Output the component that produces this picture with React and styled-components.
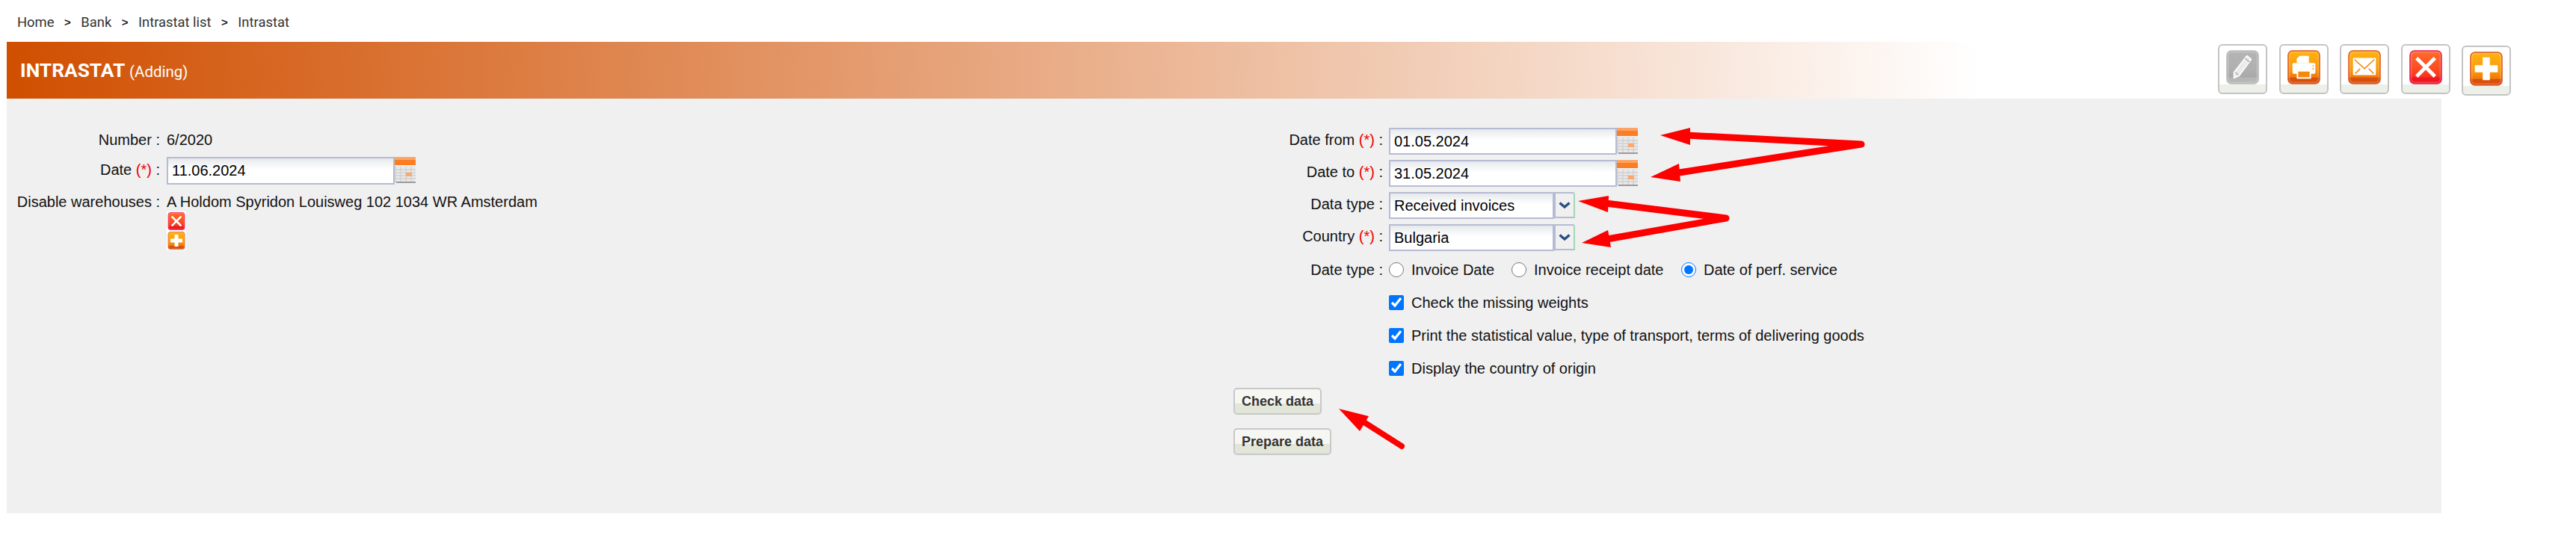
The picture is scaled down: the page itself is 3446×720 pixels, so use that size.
import styled, { createGlobalStyle } from "styled-components";

const GlobalStyle = createGlobalStyle`
  html, body {
    margin: 0;
    padding: 0;
    background: #fff;
  }
  body {
    font-family: "Liberation Sans", Arial, sans-serif;
    font-size: 20px;
    color: #111;
    overflow: hidden;
  }
`;

function GlossIcon({ tone, children, size = 46 }) {
  const id = `gloss-${tone}`;
  const stops = {
    grey: ["#b4b4b4", "#b0b0b0", "#a9a9a9", "#b6b6b6"],
    orange: ["#ffb311", "#fb9a0c", "#f07a08", "#d9500a"],
    red: ["#ff6c2c", "#fb4c24", "#f8301f", "#ee1620"],
  }[tone];
  const edge = { grey: "#bdbdbd", orange: "#dc5a28", red: "#f0205a" }[tone];
  return (
    <svg width={size} height={size} viewBox="0 0 46 48">
      <defs>
        <linearGradient id={id} x1="0" y1="0" x2="0" y2="1">
          <stop offset="0" stopColor={stops[0]} />
          <stop offset="0.55" stopColor={stops[1]} />
          <stop offset="0.8" stopColor={stops[2]} />
          <stop offset="0.82" stopColor={stops[3]} />
          <stop offset="1" stopColor={stops[3]} />
        </linearGradient>
      </defs>
      <rect x="1" y="1" width="44" height="46" rx="6" fill={`url(#${id})`} stroke={edge} strokeWidth="1.5" />
      <rect x="3" y="3" width="40" height="42" rx="4" fill="none" stroke="#fff" strokeOpacity="0.3" strokeWidth="1" />
      {children}
    </svg>
  );
}

const PencilGlyph = () => (
  <g fill="none" stroke="#fff" strokeWidth="1.6" strokeLinejoin="round">
    <path d="M29 8l6 5-17 23-7 3 0-8z" fill="#f2f2f2" fillOpacity="0.9" />
    <path d="M26.5 11.5l6 5" stroke="#b0b0b0" />
    <path d="M13 31l4 4" stroke="#b0b0b0" />
  </g>
);

const PrintGlyph = () => (
  <g>
    <path d="M13 12l4-4h13v10H13z" fill="#fff" />
    <rect x="7" y="18" width="32" height="15" rx="2" fill="#fff" />
    <rect x="13" y="27" width="20" height="13" fill="#fff" />
    <rect x="15" y="30" width="16" height="8" fill="#f58a0a" />
    <circle cx="36" cy="22" r="1" fill="#f58a0a" />
    <circle cx="36" cy="26" r="1" fill="#f58a0a" />
  </g>
);

const MailGlyph = () => (
  <g>
    <rect x="7" y="11" width="32" height="24" rx="1" fill="#fff" />
    <path d="M9 13l14 13 14-13" fill="none" stroke="#f5890f" strokeWidth="1.6" />
    <path d="M10 33l7-7M36 33l-7-7" fill="none" stroke="#f5890f" strokeWidth="1.6" />
  </g>
);

const CrossGlyph = () => (
  <path d="M12 13l22 22M34 13L12 35" stroke="#fff" strokeWidth="5" strokeLinecap="square" fill="none" />
);

const PlusGlyph = () => <path d="M18 8h10v11h11v10H28v11H18V29H7V19h11z" fill="#fff" />;

function CalendarIcon() {
  return (
    <svg width="28" height="36" viewBox="0 0 28 36">
      <rect x="0" y="0" width="28" height="4" fill="#fca466" />
      <rect x="0" y="4" width="28" height="7" fill="#fb7d24" />
      <rect x="2" y="12" width="26" height="23" fill="#e9e9e9" />
      <path d="M8 13v20M15 13v20M22 13v20M2 17h26M2 21h26M2 25h26M2 29h26" stroke="#cfcfcf" strokeWidth="1.3" />
      <rect x="15" y="21" width="8" height="5" fill="#fda869" />
      <rect x="2" y="33" width="26" height="2" fill="#9a9a9a" />
      <rect x="0" y="12" width="2" height="22" fill="#d5d5d5" />
    </svg>
  );
}

function SelectChevron() {
  return (
    <svg width="16" height="10" viewBox="0 0 16 10">
      <path d="M1.5 1.5L8 7l6.5-5.5" fill="none" stroke="#2b4d86" strokeWidth="3.4" />
    </svg>
  );
}

function Arrows() {
  return (
    <ArrowLayer viewBox="0 0 3446 720" width="3446" height="720">
      <g fill="#fd0000">
        <path d="M2221 181L2261 171L2261 194z" />
        <path d="M2208 237L2246 219L2248 243z" />
        <path d="M2111 269L2152 262L2151 284z" />
        <path d="M2116 325L2151 308L2155 331z" />
        <path d="M1791 547L1831 557L1819 577z" />
      </g>
      <g fill="none" stroke="#fd0000" strokeLinecap="round" strokeLinejoin="round">
        <path d="M2255 181L2490 193L2240 232" strokeWidth="9" />
        <path d="M2148 272L2309 292L2150 320" strokeWidth="9" />
        <path d="M1820 562L1875 597" strokeWidth="8" />
      </g>
    </ArrowLayer>
  );
}

export default function App() {
  return (
    <Page>
      <GlobalStyle />
      <Breadcrumb>
        <span>Home</span>
        <Sep>&gt;</Sep>
        <span>Bank</span>
        <Sep>&gt;</Sep>
        <span>Intrastat list</span>
        <Sep>&gt;</Sep>
        <span>Intrastat</span>
      </Breadcrumb>
      <TitleBar>
        <Title>
          INTRASTAT <small>(Adding)</small>
        </Title>
        <Toolbar>
          <ToolButton>
            <GlossIcon tone="grey"><PencilGlyph /></GlossIcon>
          </ToolButton>
          <ToolButton>
            <GlossIcon tone="orange"><PrintGlyph /></GlossIcon>
          </ToolButton>
          <ToolButton>
            <GlossIcon tone="orange"><MailGlyph /></GlossIcon>
          </ToolButton>
          <ToolButton>
            <GlossIcon tone="red"><CrossGlyph /></GlossIcon>
          </ToolButton>
          <ToolButton $drop>
            <GlossIcon tone="orange"><PlusGlyph /></GlossIcon>
          </ToolButton>
        </Toolbar>
      </TitleBar>
      <Panel>
        <LeftColumn>
          <LeftRow $h="36px">
            <Label>Number :</Label>
            <span>6/2020</span>
          </LeftRow>
          <LeftRow $h="37px" $mt="5px">
            <Label $up>
              Date <Req>(*)</Req> :
            </Label>
            <DateField>
              <TextBox $w="305px" $h="37px">11.06.2024</TextBox>
              <CalendarIcon />
            </DateField>
          </LeftRow>
          <LeftRow $top $mt="11px">
            <Label>Disable warehouses :</Label>
            <div>
              <span>A Holdom Spyridon Louisweg 102 1034 WR Amsterdam</span>
              <MiniIcons>
                <GlossIcon tone="red" size={24}><CrossGlyph /></GlossIcon>
                <GlossIcon tone="orange" size={24}><PlusGlyph /></GlossIcon>
              </MiniIcons>
            </div>
          </LeftRow>
        </LeftColumn>
        <RightColumn>
          <RightRow>
            <Label $up>
              Date from <Req>(*)</Req> :
            </Label>
            <DateField>
              <TextBox $w="305px">01.05.2024</TextBox>
              <CalendarIcon />
            </DateField>
          </RightRow>
          <RightRow>
            <Label $up>
              Date to <Req>(*)</Req> :
            </Label>
            <DateField>
              <TextBox $w="305px">31.05.2024</TextBox>
              <CalendarIcon />
            </DateField>
          </RightRow>
          <RightRow>
            <Label $up>Data type :</Label>
            <SelectBox>
              <TextBox $w="221px">Received invoices</TextBox>
              <SelectArrow>
                <SelectChevron />
              </SelectArrow>
            </SelectBox>
          </RightRow>
          <RightRow>
            <Label $up>
              Country <Req>(*)</Req> :
            </Label>
            <SelectBox>
              <TextBox $w="221px">Bulgaria</TextBox>
              <SelectArrow>
                <SelectChevron />
              </SelectArrow>
            </SelectBox>
          </RightRow>
          <RightRow>
            <Label>Date type :</Label>
            <Options>
              <Option $w="164px">
                <Radio name="dt" /> Invoice Date
              </Option>
              <Option $w="227px">
                <Radio name="dt" /> Invoice receipt date
              </Option>
              <Option>
                <Radio name="dt" defaultChecked /> Date of perf. service
              </Option>
            </Options>
          </RightRow>
          <CheckRow>
            <Option>
              <Check defaultChecked /> Check the missing weights
            </Option>
          </CheckRow>
          <CheckRow>
            <Option>
              <Check defaultChecked /> Print the statistical value, type of transport, terms of delivering goods
            </Option>
          </CheckRow>
          <CheckRow>
            <Option>
              <Check defaultChecked /> Display the country of origin
            </Option>
          </CheckRow>
          <Actions>
            <ActionButton>Check data</ActionButton>
            <ActionButton>Prepare data</ActionButton>
          </Actions>
        </RightColumn>
      </Panel>
      <Arrows />
    </Page>
  );
}

const Page = styled.div`
  position: relative;
  width: 3446px;
  height: 720px;
  overflow: hidden;
`;

const Breadcrumb = styled.nav`
  height: 56px;
  box-sizing: border-box;
  padding: 19px 0 0 23px;
  display: flex;
  gap: 13.5px;
  font-family: Roboto, sans-serif;
  font-size: 18.4px;
  line-height: 22px;
  color: #333;
`;

const Sep = styled.span`
  color: #222;
  font-family: "Liberation Sans", sans-serif;
  font-weight: 700;
  font-size: 15px;
`;

const TitleBar = styled.header`
  height: 76px;
  margin-left: 9px;
  display: flex;
  align-items: flex-start;
  justify-content: space-between;
  background: linear-gradient(to right, #d04f00 0, #ffffff 2640px);
`;

const Title = styled.h1`
  margin: 23px 0 0 18px;
  font-family: Roboto, sans-serif;
  font-size: 26.3px;
  line-height: 30px;
  font-weight: 700;
  color: #fff;
  small {
    font-size: 20.5px;
    font-weight: 400;
  }
`;

const Toolbar = styled.div`
  display: flex;
  gap: 15.5px;
  padding: 3px 87px 0 0;
`;

const ToolButton = styled.div`
  width: 66px;
  height: 67px;
  margin-top: ${(p) => (p.$drop ? "2px" : "0")};
  box-sizing: border-box;
  border: 2px solid #c4c4c4;
  border-radius: 6px;
  background: linear-gradient(to bottom, #fff 0, #fff 82%, #edf0e8 82%, #edf0e8 100%);
  display: flex;
  justify-content: center;
  padding-top: 6px;
`;

const Panel = styled.main`
  width: 3257px;
  height: 555px;
  margin-left: 9px;
  background: #f0f0f0;
  display: flex;
`;

const LeftColumn = styled.section`
  width: 1641px;
  padding-top: 33px;
  box-sizing: border-box;
`;

const LeftRow = styled.div`
  display: grid;
  grid-template-columns: 205px 1fr;
  column-gap: 9px;
  height: ${(p) => p.$h || "auto"};
  margin-top: ${(p) => p.$mt || "4px"};
  align-items: ${(p) => (p.$top ? "start" : "center")};
  line-height: 24px;
`;

const Label = styled.div`
  text-align: right;
  white-space: nowrap;
  padding-bottom: ${(p) => (p.$up ? "4px" : "0")};
`;

const Req = styled.span`
  color: #f00000;
`;

const DateField = styled.div`
  display: flex;
  align-items: flex-start;
`;

const TextBox = styled.div`
  box-sizing: border-box;
  width: ${(p) => p.$w};
  height: ${(p) => p.$h || "36px"};
  border: 2px solid #b5bbd2;
  padding-left: 5px;
  line-height: 33px;
  color: #000;
  background: linear-gradient(to bottom, #e6e9ec 0, #fff 45%);
`;

const MiniIcons = styled.div`
  width: 26px;
  margin-top: 1px;
  padding: 1px;
  box-sizing: border-box;
  display: flex;
  flex-direction: column;
  gap: 2px;
  background: #fff;
  svg {
    display: block;
  }
`;

const RightColumn = styled.section`
  padding-top: 39px;
  display: flex;
  flex-direction: column;
  gap: 7px;
`;

const RightRow = styled.div`
  display: grid;
  grid-template-columns: 200px 1fr;
  column-gap: 8px;
  height: 36px;
  align-items: center;
  line-height: 24px;
`;

const CheckRow = styled.div`
  height: 36px;
  margin-top: 1px;
  padding-left: 208px;
  display: flex;
  align-items: center;
`;

const SelectBox = styled.div`
  display: flex;
  align-items: flex-start;
`;

const SelectArrow = styled.div`
  box-sizing: border-box;
  width: 28px;
  height: 35px;
  border-top: 2px solid #b5bbd2;
  border-left: 2px solid #b5bbd2;
  border-bottom: 2px solid #b5bbd2;
  border-right: 2px solid #a5d8b4;
  background: #f0f0f0;
  border-top-right-radius: 3px;
  display: flex;
  align-items: center;
  justify-content: center;
`;

const Options = styled.div`
  display: flex;
`;

const Option = styled.label`
  width: ${(p) => p.$w || "auto"};
  flex: none;
  display: flex;
  align-items: center;
  gap: 10px;
  white-space: nowrap;
`;

const Radio = styled.input.attrs({ type: "radio" })`
  width: 20px;
  height: 20px;
  margin: 0;
`;

const Check = styled.input.attrs({ type: "checkbox" })`
  width: 20px;
  height: 20px;
  margin: 0;
`;

const Actions = styled.div`
  margin-top: 1px;
  display: flex;
  flex-direction: column;
  align-items: flex-start;
  gap: 18px;
`;

const ActionButton = styled.button`
  height: 36px;
  padding: 0 9px;
  box-sizing: border-box;
  border: 2px solid #c8c8c8;
  border-radius: 5px;
  background: linear-gradient(to bottom, #f6f6f2 0, #f6f6f2 60%, #e1e6d8 60%, #e1e6d8 100%);
  font-family: "Liberation Sans", sans-serif;
  font-size: 18px;
  font-weight: 700;
  color: #333;
`;

const ArrowLayer = styled.svg`
  position: absolute;
  left: 0;
  top: 0;
  pointer-events: none;
`;
